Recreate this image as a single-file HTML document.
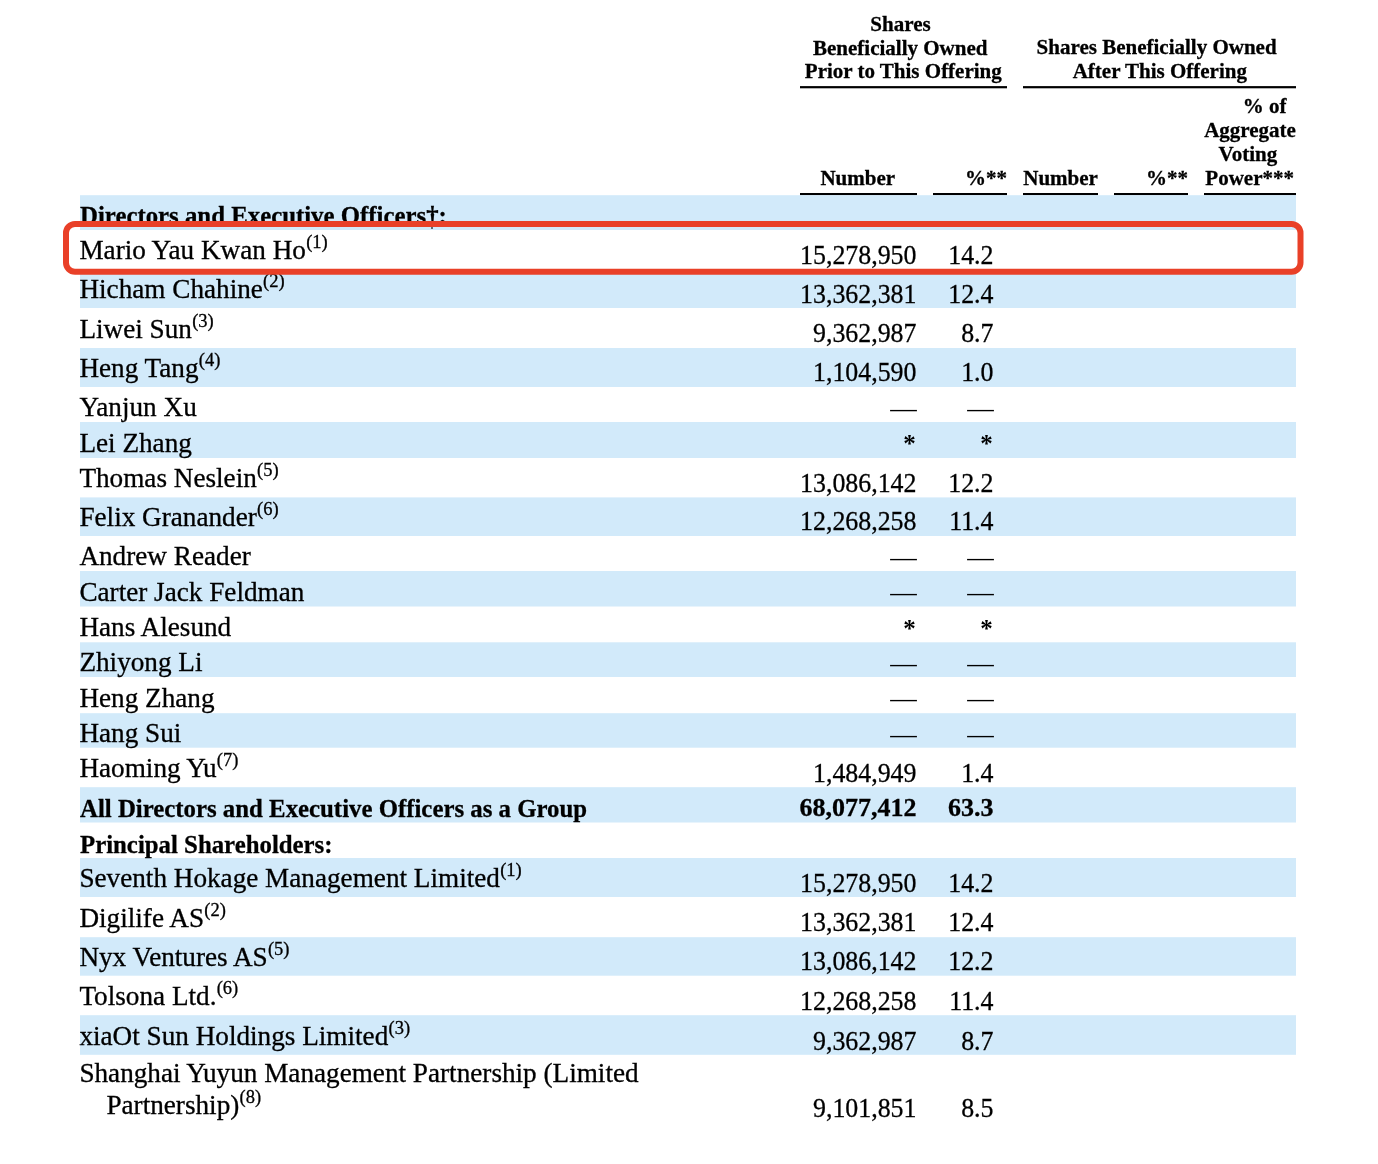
<!DOCTYPE html><html><head><meta charset="utf-8"><style>
html,body{margin:0;padding:0;background:#fff;}
body{width:1378px;height:1164px;overflow:hidden;position:relative;}
svg{position:absolute;left:0;top:0;display:block;will-change:transform;}
text{font-family:"Liberation Serif",serif;fill:#000;stroke:#000;stroke-width:0.3px;}
.b{font-weight:700;}
.ns{stroke:none;}
</style></head><body>
<svg width="1378" height="1164" viewBox="0 0 1378 1164">
<text class="b" x="900.5" y="30.5" font-size="21" text-anchor="middle">Shares</text>
<text class="b" x="900.2" y="54.5" font-size="21" text-anchor="middle">Beneficially Owned</text>
<text class="b" x="903.3" y="78.4" font-size="21" text-anchor="middle">Prior to This Offering</text>
<text class="b" x="1156.6" y="54.4" font-size="21" text-anchor="middle">Shares Beneficially Owned</text>
<text class="b" x="1159.8" y="78.3" font-size="21" text-anchor="middle">After This Offering</text>
<text class="b" x="1264.5" y="112.9" font-size="21" text-anchor="middle">% of</text>
<text class="b" x="1250" y="136.8" font-size="21" text-anchor="middle">Aggregate</text>
<text class="b" x="1247.8" y="160.8" font-size="21" text-anchor="middle">Voting</text>
<text class="b" x="857.8" y="184.8" font-size="21" text-anchor="middle">Number</text>
<text class="b" x="1060.6" y="184.8" font-size="21" text-anchor="middle">Number</text>
<text class="b" x="1007" y="184.8" font-size="21" text-anchor="end">%**</text>
<text class="b" x="1188" y="184.8" font-size="21" text-anchor="end">%**</text>
<text class="b" x="1294" y="184.8" font-size="21" text-anchor="end">Power***</text>
<rect x="800" y="86.1" width="207" height="2.2" fill="#000"/>
<rect x="1023" y="86.1" width="273" height="2.2" fill="#000"/>
<rect x="800" y="193" width="117" height="2.2" fill="#000"/>
<rect x="933" y="193" width="74" height="2.2" fill="#000"/>
<rect x="1023" y="193" width="75" height="2.2" fill="#000"/>
<rect x="1114" y="193" width="74" height="2.2" fill="#000"/>
<rect x="1204" y="193" width="92" height="2.2" fill="#000"/>
<rect x="80" y="195.2" width="1216" height="34.80" fill="#D2EAFA"/>
<rect x="80" y="269" width="1216" height="39.00" fill="#D2EAFA"/>
<rect x="80" y="348" width="1216" height="39.00" fill="#D2EAFA"/>
<rect x="80" y="422" width="1216" height="36.00" fill="#D2EAFA"/>
<rect x="80" y="497.4" width="1216" height="38.60" fill="#D2EAFA"/>
<rect x="80" y="571" width="1216" height="35.50" fill="#D2EAFA"/>
<rect x="80" y="642.3" width="1216" height="34.70" fill="#D2EAFA"/>
<rect x="80" y="713.2" width="1216" height="34.50" fill="#D2EAFA"/>
<rect x="80" y="787.2" width="1216" height="35.30" fill="#D2EAFA"/>
<rect x="80" y="858" width="1216" height="39.00" fill="#D2EAFA"/>
<rect x="80" y="937.2" width="1216" height="38.50" fill="#D2EAFA"/>
<rect x="80" y="1015.2" width="1216" height="39.60" fill="#D2EAFA"/>
<text class="b" font-size="26" transform="translate(80 224) scale(0.955 1)" x="0" y="0">Directors and Executive Officers†:</text>
<text x="79.4" y="258.7" font-size="27.2">Mario Yau Kwan Ho<tspan font-size="18.5" dx="0.2" dy="-11">(1)</tspan></text>
<text transform="translate(916.5 263.8) scale(0.945 1)" font-size="27.4" text-anchor="end">15,278,950</text>
<text transform="translate(993.5 263.8) scale(0.945 1)" font-size="27.4" text-anchor="end">14.2</text>
<text x="79.4" y="297.9" font-size="27.2">Hicham Chahine<tspan font-size="18.5" dx="0.2" dy="-11">(2)</tspan></text>
<text transform="translate(916.5 302.6) scale(0.945 1)" font-size="27.4" text-anchor="end">13,362,381</text>
<text transform="translate(993.5 302.6) scale(0.945 1)" font-size="27.4" text-anchor="end">12.4</text>
<text x="79.4" y="337.6" font-size="27.2">Liwei Sun<tspan font-size="18.5" dx="0.2" dy="-11">(3)</tspan></text>
<text transform="translate(916.5 341.9) scale(0.945 1)" font-size="27.4" text-anchor="end">9,362,987</text>
<text transform="translate(993.5 341.9) scale(0.945 1)" font-size="27.4" text-anchor="end">8.7</text>
<text x="79.4" y="376.9" font-size="27.2">Heng Tang<tspan font-size="18.5" dx="0.2" dy="-11">(4)</tspan></text>
<text transform="translate(916.5 381) scale(0.945 1)" font-size="27.4" text-anchor="end">1,104,590</text>
<text transform="translate(993.5 381) scale(0.945 1)" font-size="27.4" text-anchor="end">1.0</text>
<text x="79.4" y="416" font-size="27.2">Yanjun Xu</text>
<text class="ns" x="916.8" y="416.8" font-size="26.5" text-anchor="end">—</text>
<text class="ns" x="993.8" y="416.8" font-size="26.5" text-anchor="end">—</text>
<text x="79.4" y="451.5" font-size="27.2">Lei Zhang</text>
<text class="ns b" x="915.7" y="451.5" font-size="25" text-anchor="end">*</text>
<text class="ns b" x="992.7" y="451.5" font-size="25" text-anchor="end">*</text>
<text x="79.4" y="487.1" font-size="27.2">Thomas Neslein<tspan font-size="18.5" dx="0.2" dy="-11">(5)</tspan></text>
<text transform="translate(916.5 491.6) scale(0.945 1)" font-size="27.4" text-anchor="end">13,086,142</text>
<text transform="translate(993.5 491.6) scale(0.945 1)" font-size="27.4" text-anchor="end">12.2</text>
<text x="79.4" y="525.8" font-size="27.2">Felix Granander<tspan font-size="18.5" dx="0.2" dy="-11">(6)</tspan></text>
<text transform="translate(916.5 530.3) scale(0.945 1)" font-size="27.4" text-anchor="end">12,268,258</text>
<text transform="translate(993.5 530.3) scale(0.945 1)" font-size="27.4" text-anchor="end">11.4</text>
<text x="79.4" y="564.7" font-size="27.2">Andrew Reader</text>
<text class="ns" x="916.8" y="565.5" font-size="26.5" text-anchor="end">—</text>
<text class="ns" x="993.8" y="565.5" font-size="26.5" text-anchor="end">—</text>
<text x="79.4" y="600.8" font-size="27.2">Carter Jack Feldman</text>
<text class="ns" x="916.8" y="600.8" font-size="26.5" text-anchor="end">—</text>
<text class="ns" x="993.8" y="600.8" font-size="26.5" text-anchor="end">—</text>
<text x="79.4" y="635.7" font-size="27.2">Hans Alesund</text>
<text class="ns b" x="915.7" y="636.5" font-size="25" text-anchor="end">*</text>
<text class="ns b" x="992.7" y="636.5" font-size="25" text-anchor="end">*</text>
<text x="79.4" y="670.9" font-size="27.2">Zhiyong Li</text>
<text class="ns" x="916.8" y="671.9" font-size="26.5" text-anchor="end">—</text>
<text class="ns" x="993.8" y="671.9" font-size="26.5" text-anchor="end">—</text>
<text x="79.4" y="706.8" font-size="27.2">Heng Zhang</text>
<text class="ns" x="916.8" y="706.8" font-size="26.5" text-anchor="end">—</text>
<text class="ns" x="993.8" y="706.8" font-size="26.5" text-anchor="end">—</text>
<text x="79.4" y="742" font-size="27.2">Hang Sui</text>
<text class="ns" x="916.8" y="743" font-size="26.5" text-anchor="end">—</text>
<text class="ns" x="993.8" y="743" font-size="26.5" text-anchor="end">—</text>
<text x="79.4" y="776.8" font-size="27.2">Haoming Yu<tspan font-size="18.5" dx="0.2" dy="-11">(7)</tspan></text>
<text transform="translate(916.5 782.3) scale(0.945 1)" font-size="27.4" text-anchor="end">1,484,949</text>
<text transform="translate(993.5 782.3) scale(0.945 1)" font-size="27.4" text-anchor="end">1.4</text>
<text class="b" font-size="26" transform="translate(80 816.7) scale(0.955 1)" x="0" y="0">All Directors and Executive Officers as a Group</text>
<text class="b" x="916.5" y="816.4" font-size="26" text-anchor="end">68,077,412</text>
<text class="b" x="993.5" y="816.4" font-size="26" text-anchor="end">63.3</text>
<text class="b" font-size="26" transform="translate(80 853) scale(0.955 1)" x="0" y="0">Principal Shareholders:</text>
<text x="79.4" y="887" font-size="27.2">Seventh Hokage Management Limited<tspan font-size="18.5" dx="0.2" dy="-11">(1)</tspan></text>
<text transform="translate(916.5 891.5) scale(0.945 1)" font-size="27.4" text-anchor="end">15,278,950</text>
<text transform="translate(993.5 891.5) scale(0.945 1)" font-size="27.4" text-anchor="end">14.2</text>
<text x="79.4" y="926.5" font-size="27.2">Digilife AS<tspan font-size="18.5" dx="0.2" dy="-11">(2)</tspan></text>
<text transform="translate(916.5 931) scale(0.945 1)" font-size="27.4" text-anchor="end">13,362,381</text>
<text transform="translate(993.5 931) scale(0.945 1)" font-size="27.4" text-anchor="end">12.4</text>
<text x="79.4" y="965.8" font-size="27.2">Nyx Ventures AS<tspan font-size="18.5" dx="0.2" dy="-11">(5)</tspan></text>
<text transform="translate(916.5 970.3) scale(0.945 1)" font-size="27.4" text-anchor="end">13,086,142</text>
<text transform="translate(993.5 970.3) scale(0.945 1)" font-size="27.4" text-anchor="end">12.2</text>
<text x="79.4" y="1004.9" font-size="27.2">Tolsona Ltd.<tspan font-size="18.5" dx="0.2" dy="-11">(6)</tspan></text>
<text transform="translate(916.5 1009.9) scale(0.945 1)" font-size="27.4" text-anchor="end">12,268,258</text>
<text transform="translate(993.5 1009.9) scale(0.945 1)" font-size="27.4" text-anchor="end">11.4</text>
<text x="79.4" y="1044.7" font-size="27.2">xiaOt Sun Holdings Limited<tspan font-size="18.5" dx="0.2" dy="-11">(3)</tspan></text>
<text transform="translate(916.5 1049.7) scale(0.945 1)" font-size="27.4" text-anchor="end">9,362,987</text>
<text transform="translate(993.5 1049.7) scale(0.945 1)" font-size="27.4" text-anchor="end">8.7</text>
<text x="79.4" y="1081.8" font-size="27.2">Shanghai Yuyun Management Partnership (Limited</text>
<text x="106.4" y="1113.8" font-size="27.2">Partnership)<tspan font-size="18.5" dx="0.2" dy="-11">(8)</tspan></text>
<text transform="translate(916.5 1116.7) scale(0.945 1)" font-size="27.4" text-anchor="end">9,101,851</text>
<text transform="translate(993.5 1116.7) scale(0.945 1)" font-size="27.4" text-anchor="end">8.5</text>
<rect x="66" y="224.1" width="1234.5" height="47.6" rx="9" ry="9" fill="none" stroke="#E94028" stroke-width="6"/>
<rect x="431.3" y="227" width="1.4" height="2" fill="#333"/>
</svg></body></html>
